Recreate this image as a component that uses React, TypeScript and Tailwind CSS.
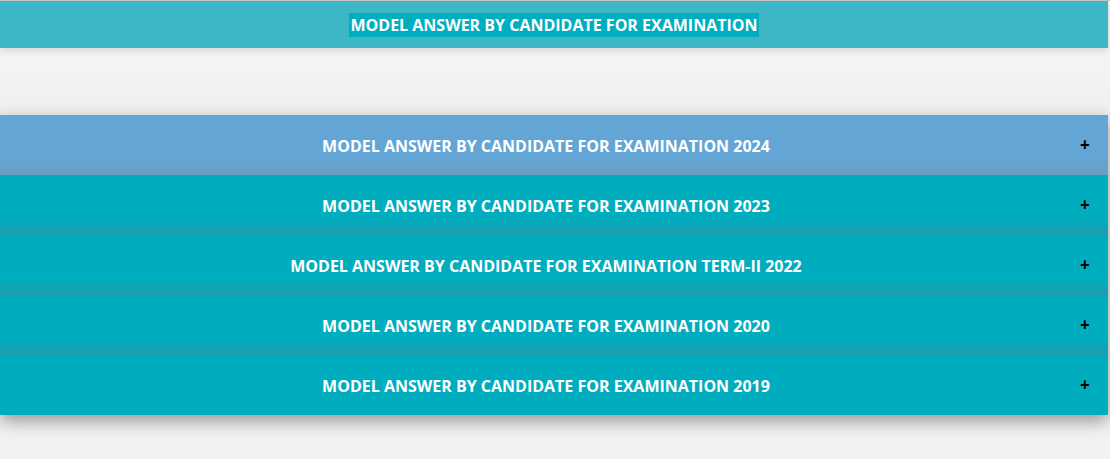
import React from "react";

const rows = [
  "MODEL ANSWER BY CANDIDATE FOR EXAMINATION 2024",
  "MODEL ANSWER BY CANDIDATE FOR EXAMINATION 2023",
  "MODEL ANSWER BY CANDIDATE FOR EXAMINATION TERM-II 2022",
  "MODEL ANSWER BY CANDIDATE FOR EXAMINATION 2020",
  "MODEL ANSWER BY CANDIDATE FOR EXAMINATION 2019",
];

export default function App() {
  return (
    <div
      className="w-[1110px] h-[459px] overflow-hidden bg-[#f2f2f2] border-t border-[#c4c4c4] flex flex-col"
      style={{ fontFamily: "'Open Sans', 'Liberation Sans', sans-serif" }}
    >
      <div className="w-[1108px] h-[47px] bg-[#3db6c6] flex items-center justify-center shadow-[0_3px_8px_rgba(0,0,0,0.12)] relative z-10">
        <span className="bg-[#00aebf] text-white font-bold text-[16px] leading-[24px] px-[1px]">
          MODEL ANSWER BY CANDIDATE FOR EXAMINATION
        </span>
      </div>
      <div className="h-[67px] bg-gradient-to-b from-[#f5f5f5] to-[#efefef]" />
      <div className="w-[1108px] flex flex-col shadow-[0_6px_16px_rgba(0,0,0,0.38)]">
        {rows.map((t, i) => (
          <div
            key={t}
            className={`h-[60px] relative flex items-center justify-center pr-[16px] ${
              i === 0
                ? "bg-[linear-gradient(to_bottom,#63a5d5_0,#63a5d5_44px,#6c9cc0_60px)]"
                : i === rows.length - 1
                ? "bg-[#00adbe]"
                : "bg-[linear-gradient(to_bottom,#00adbe_0,#00adbe_44px,#1f9dae_60px)]"
            }`}
          >
            <span className="text-white font-bold text-[16px] leading-[20px] mt-[1px]">{t}</span>
            <span className="absolute left-[1080px] top-[20px] text-black font-bold text-[17px] leading-[20px]">+</span>
          </div>
        ))}
      </div>
    </div>
  );
}
